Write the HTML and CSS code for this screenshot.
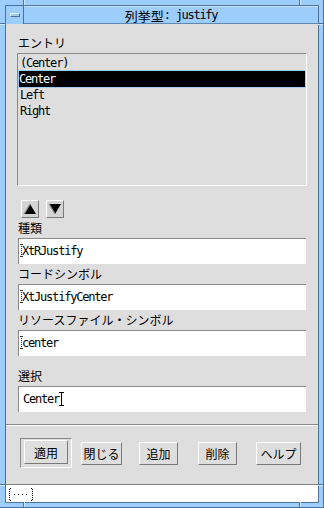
FILE: index.html
```html
<!DOCTYPE html>
<html>
<head>
<meta charset="utf-8">
<link rel="stylesheet" href="styles.css">
</head>
<body>
<div class="win">
  <span class="notch v" style="left:23px;top:0"></span>
  <span class="notch v" style="left:299px;top:0"></span>
  <span class="notch v" style="left:23px;bottom:0"></span>
  <span class="notch v" style="left:299px;bottom:0"></span>
  <span class="notch h" style="left:0;top:23px"></span>
  <span class="notch h" style="right:0;top:23px"></span>
  <span class="notch h" style="left:0;top:484px"></span>
  <span class="notch h" style="right:0;top:484px"></span>
  <div class="inner">
    <div class="titlebar">
      <div class="menubtn"><span class="menubar"></span></div>
      <div class="title"><span class="tjp">列挙型</span><span class="tmono">: justify</span></div>
    </div>
    <div class="client">
      <div class="lbl first">エントリ</div>
      <div class="list">
        <div class="item">(Center)</div>
        <div class="item sel">Center</div>
        <div class="item">Left</div>
        <div class="item">Right</div>
      </div>
      <div class="arrows">
        <div class="abtn">
          <svg width="16" height="16" viewBox="0 0 16 16"><polygon points="8,3 14,13 2,13" fill="#000"/><polyline points="2,13 8,3" stroke="#9a9a9a" stroke-width="1.4" fill="none"/></svg>
        </div>
        <div class="abtn">
          <svg width="16" height="16" viewBox="0 0 16 16"><polygon points="2,3 14,3 8,13" fill="#000"/><polyline points="2,3 8,13" stroke="#9a9a9a" stroke-width="1.4" fill="none"/></svg>
        </div>
      </div>
      <div class="lbl">種類</div>
      <div class="field"><span class="dcur"></span>XtRJustify</div>
      <div class="lbl">コードシンボル</div>
      <div class="field"><span class="dcur"></span>XtJustifyCenter</div>
      <div class="lbl">リソースファイル・シンボル</div>
      <div class="field"><span class="dcur"></span>center</div>
      <div class="lbl gap">選択</div>
      <div class="field active">Center<span class="ibeam"></span></div>
      <div class="sep"></div>
      <div class="actions">
        <div class="defwrap"><div class="btn w44">適用</div></div>
        <div class="btn w41 m9">閉じる</div>
        <div class="btn w39 m17">追加</div>
        <div class="btn w39 m20">削除</div>
        <div class="btn w45 m19">ヘルプ</div>
      </div>
    </div>
    <div class="status">
      <svg width="28" height="16" viewBox="0 0 28 16" class="dots">
        <g fill="#000">
          <rect x="3" y="2" width="1" height="1"/><rect x="2" y="3" width="1" height="1"/>
          <rect x="2" y="5" width="1" height="1"/><rect x="2" y="7" width="1" height="1"/>
          <rect x="2" y="9" width="1" height="1"/><rect x="2" y="11" width="1" height="1"/>
          <rect x="2" y="13" width="1" height="1"/><rect x="3" y="14" width="1" height="1"/>
          <rect x="7" y="8" width="1" height="1"/><rect x="11" y="8" width="1" height="1"/>
          <rect x="15" y="8" width="1" height="1"/><rect x="19" y="8" width="1" height="1"/>
          <rect x="24" y="2" width="1" height="1"/><rect x="25" y="3" width="1" height="1"/>
          <rect x="25" y="5" width="1" height="1"/><rect x="25" y="7" width="1" height="1"/>
          <rect x="25" y="9" width="1" height="1"/><rect x="25" y="11" width="1" height="1"/>
          <rect x="25" y="13" width="1" height="1"/><rect x="24" y="14" width="1" height="1"/>
        </g>
      </svg>
    </div>
  </div>
</div>
</body>
</html>
```
FILE: styles.css
```css
html, body {
  margin: 0;
  padding: 0;
  background: #9ccdfb;
}
.win {
  position: relative;
  width: 324px;
  height: 508px;
  box-sizing: border-box;
  background: #9ccdfb;
  border-right: 1px solid #4c739b;
  border-bottom: 1px solid #4c739b;
  padding: 5px 4px 4px 5px;
}
.notch {
  position: absolute;
  background: #4c739b;
}
.notch.v { width: 1px; height: 5px; box-shadow: 1px 0 0 #d2e9ff; }
.notch.h { width: 5px; height: 1px; box-shadow: 0 1px 0 #d2e9ff; }
.inner {
  height: 100%;
  box-sizing: border-box;
  border: 1px solid #4c739b;
  display: flex;
  flex-direction: column;
}
.titlebar {
  height: 18px;
  display: flex;
  background: #9ccdfb;
  flex: none;
}
.menubtn {
  width: 17px;
  border-right: 1px solid #4c739b;
  box-sizing: content-box;
  display: flex;
  align-items: center;
  justify-content: center;
}
.menubar {
  width: 8px;
  height: 2px;
  background: #9ccdfb;
  border-top: 1px solid #e4f2ff;
  border-left: 1px solid #e4f2ff;
  border-bottom: 1px solid #4c739b;
  border-right: 1px solid #4c739b;
}
.title {
  flex: 1;
  display: flex;
  align-items: center;
  justify-content: center;
  color: #000;
  border-top: 1px solid #c8e4ff;
  border-bottom: 1px solid #5f89b3;
  box-sizing: border-box;
}
.tjp {
  font-family: "Noto Sans CJK JP", sans-serif;
  font-size: 13px;
}
.tmono {
  font-family: "DejaVu Sans Mono", monospace;
  font-size: 12px;
  letter-spacing: -1.3px;
}
.client {
  height: 461px;
  box-sizing: border-box;
  background: #dedede;
  border-bottom: 1px solid #7f7f7f;
  padding: 0 11px;
  flex: none;
}
.lbl {
  height: 20px;
  line-height: 20px;
  font-family: "Noto Sans CJK JP", sans-serif;
  font-size: 12px;
  color: #000;
  padding-left: 1px;
}
.lbl.first { margin-top: 9px; }
.lbl.gap { margin-top: 10px; }
.list {
  height: 133px;
  box-sizing: border-box;
  border-top: 1px solid #8a8a8a;
  border-left: 1px solid #8a8a8a;
  border-right: 1px solid #fff;
  border-bottom: 1px solid #fff;
  padding-top: 1px;
}
.item {
  height: 16px;
  line-height: 16px;
  margin: 0 1px;
  padding-left: 1px;
  font-family: "DejaVu Sans Mono", monospace;
  font-size: 12px;
  letter-spacing: -1.2px;
  color: #000;
}
.item.sel {
  background: #000;
  color: #fff;
  outline: 1px solid #9ccdfb;
  padding-left: 0;
}
.arrows {
  display: flex;
  gap: 7px;
  margin-top: 14px;
  margin-left: 4px;
}
.abtn {
  width: 18px;
  height: 18px;
  box-sizing: border-box;
  background: #d4d4d4;
  border-top: 1px solid #fff;
  border-left: 1px solid #fff;
  border-right: 1px solid #7a7a7a;
  border-bottom: 1px solid #7a7a7a;
  display: flex;
  align-items: center;
  justify-content: center;
}
.field {
  position: relative;
  height: 26px;
  box-sizing: border-box;
  margin-left: 1px;
  margin-right: 1px;
  background: #fff;
  border-top: 1px solid #8a8a8a;
  border-left: 1px solid #8a8a8a;
  padding-left: 3px;
  line-height: 24px;
  font-family: "DejaVu Sans Mono", monospace;
  font-size: 12px;
  letter-spacing: -1.2px;
  color: #000;
}
.field.active { padding-left: 4px; }
.dcur {
  position: absolute;
  left: 1px;
  top: 5px;
  width: 3px;
  height: 13px;
  background-image:
    linear-gradient(#000, #000),
    linear-gradient(#000, #000),
    repeating-linear-gradient(to bottom, #000 0 1px, transparent 1px 2px);
  background-size: 3px 1px, 3px 1px, 1px 13px;
  background-position: 0 0, 0 12px, 1px 0;
  background-repeat: no-repeat;
  opacity: 0.8;
}
.ibeam {
  display: inline-block;
  position: relative;
  width: 5px;
  height: 14px;
  vertical-align: -3px;
  background-image:
    linear-gradient(#000, #000),
    linear-gradient(#000, #000),
    linear-gradient(#000, #000);
  background-size: 5px 1px, 5px 1px, 1px 14px;
  background-position: 0 0, 0 13px, 2px 0;
  background-repeat: no-repeat;
}
.sep {
  margin: 12px -11px 0;
  height: 1px;
  background: #8a8a8a;
  border-bottom: 1px solid #fff;
}
.actions {
  display: flex;
  align-items: center;
  margin-top: 12px;
  margin-left: 3px;
}
.defwrap {
  border-top: 1px solid #8a8a8a;
  border-left: 1px solid #8a8a8a;
  border-right: 1px solid #fff;
  border-bottom: 1px solid #fff;
  padding: 1px 3px 3px 3px;
}
.btn {
  height: 23px;
  box-sizing: border-box;
  border-top: 1px solid #fff;
  border-left: 1px solid #fff;
  border-right: 1px solid #7a7a7a;
  border-bottom: 1px solid #7a7a7a;
  background: #dedede;
  display: flex;
  align-items: center;
  justify-content: center;
  font-family: "Noto Sans CJK JP", sans-serif;
  font-size: 12px;
  color: #000;
}
.defwrap .btn { height: 24px; }
.w44 { width: 44px; }
.w41 { width: 41px; }
.w39 { width: 39px; }
.w45 { width: 45px; }
.m9 { margin-left: 9px; }
.m17 { margin-left: 17px; }
.m20 { margin-left: 20px; }
.m19 { margin-left: 19px; }
.status {
  flex: 1;
  background: #fff;
  display: flex;
  align-items: center;
  padding-left: 1px;
}
.dots { display: block; }
```
